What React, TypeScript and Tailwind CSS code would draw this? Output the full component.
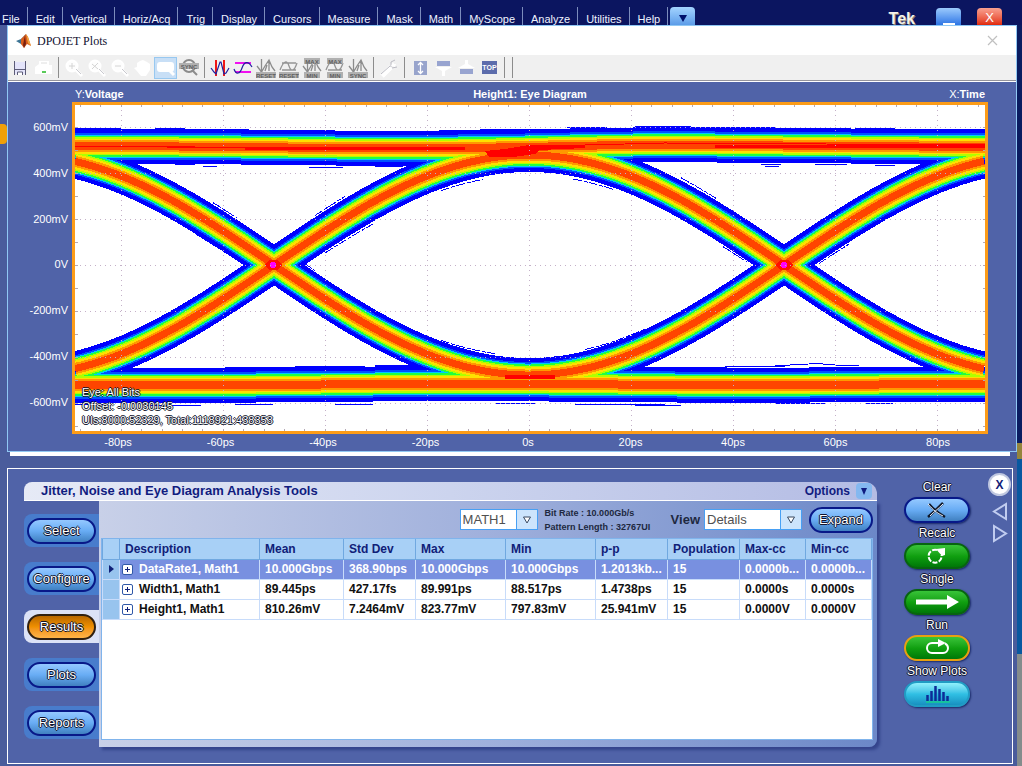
import { ReactNode } from "react";

const MENUS = [
  "File",
  "Edit",
  "Vertical",
  "Horiz/Acq",
  "Trig",
  "Display",
  "Cursors",
  "Measure",
  "Mask",
  "Math",
  "MyScope",
  "Analyze",
  "Utilities",
  "Help",
];

const OUTLINE =
  "[text-shadow:1px_0_#10142c,-1px_0_#10142c,0_1px_#10142c,0_-1px_#10142c]";

function MenuBar() {
  return (
    <header className="flex h-[25px] items-end bg-[#0b1560]">
      <nav className="flex h-[18px] text-[11px] leading-6 text-[#eef2ff]">
        {MENUS.map((menu, i) => (
          <a
            key={menu}
            href="#"
            className={`border-r border-[#7c8cbc] pr-[7px] ${i === 0 ? "pl-[2px]" : "pl-2"}`}
          >
            {menu}
          </a>
        ))}
        <button
          aria-label="More menus"
          className="ml-[2px] flex w-[25px] items-center justify-center rounded-t bg-gradient-to-b from-[#a4d4ff] to-[#5c9ce8]"
        >
          <svg width="8" height="8" viewBox="0 0 8 8" className="mt-1">
            <path d="M0 1h8L4 8z" fill="#00106c" />
          </svg>
        </button>
      </nav>
      <span className="ml-auto text-[16px] leading-3 font-bold text-[#f4f2ea] [text-shadow:1px_1px_#8c8474]">
        Tek
      </span>
      <button
        aria-label="Minimize"
        className="ml-[21px] flex h-[17px] w-[25px] items-end justify-center rounded-t bg-gradient-to-b from-[#9ccafc] to-[#2c74e4]"
      >
        <span className="h-[2px] w-3 bg-white" />
      </button>
      <button
        aria-label="Close"
        className="mr-5 ml-4 flex h-[17px] w-[25px] items-end justify-center rounded-t bg-gradient-to-b from-[#f8a090] to-[#e02400] text-[13px] leading-[14px] text-white"
      >
        X
      </button>
    </header>
  );
}

/* ---------- toolbar ---------- */

function Magnifier({ children }: { children?: ReactNode }) {
  return (
    <>
      <circle cx="8" cy="8" r="5.5" fill="#fdfdfd" stroke="#fff" strokeWidth="2" />
      <path d="M12 12l6 6" stroke="#fff" strokeWidth="3" />
      <path d="M12 11l5 5" stroke="#c9c9cf" strokeWidth="1" />
      {children}
    </>
  );
}

function Tag({ y, children }: { y: number; children: string }) {
  return (
    <>
      <rect x={children.length > 3 ? 0 : 2} y={y} width={children.length > 3 ? 20 : 16} height="6" fill="#b0b0b0" />
      <text x="10" y={y + 5.5} textAnchor="middle" fontSize="6" fontWeight="bold" fill="#606060">
        {children}
      </text>
    </>
  );
}

function Cursors() {
  return (
    <path
      d="M5.500 1v13M1 8l4.500 6L9 8l4-6 3 7 3 4M13 2v11M9 13l2-6"
      fill="none"
      stroke="#8c8c8c"
      strokeWidth="1.300"
    />
  );
}

function Wave() {
  return (
    <path d="M3 5h14M3 12h14M1 12C5 2 8 2 10 8s5 6 8-3" fill="none" stroke="#949494" strokeWidth="1.300" />
  );
}

type Tool = { name: string; icon: ReactNode; on?: boolean } | "|";

const TOOLS: Tool[] = [
  {
    name: "Save",
    icon: (
      <>
        <path d="M4 4h12v12H4z" fill="#e4e4fa" />
        <path d="M4.500 3v14M15.500 3v14M4 11.500h12" stroke="#5c5c78" />
        <path d="M7.500 17v-3h5v3" fill="#fff" stroke="#5c5c78" />
      </>
    ),
  },
  {
    name: "Print",
    icon: (
      <>
        <path d="M6 3h10v4h3v9H2V9l4-3z" fill="#fff" />
        <path d="M8 5h6" stroke="#dedede" />
        <path d="M9 14h4" stroke="#22b822" strokeWidth="1.500" />
      </>
    ),
  },
  "|",
  { name: "Zoom in", icon: <Magnifier><path d="M5 8h6M8 5v6" stroke="#d4d4d4" /></Magnifier> },
  { name: "Zoom both", icon: <Magnifier><path d="M5 6l6 5M11 5l-6 6" stroke="#d4d4d4" /></Magnifier> },
  { name: "Zoom out", icon: <Magnifier><path d="M5 8h6" stroke="#d4d4d4" /></Magnifier> },
  {
    name: "Pan",
    icon: <path d="M4 9V5l3-2 3-1 4 2 3 2v6l-4 6H8l-5-6-2-2z" fill="#fff" />,
  },
  {
    name: "Zoom window",
    on: true,
    icon: (
      <>
        <rect x="1" y="4" width="17" height="10" rx="3" fill="#fff" />
        <path d="M13 12l5 5" stroke="#fff" strokeWidth="3" />
      </>
    ),
  },
  {
    name: "Sync zoom",
    icon: (
      <>
        <circle cx="10" cy="8" r="6" fill="none" stroke="#8c8c8c" strokeWidth="2" />
        <path d="M13 12l5 5" stroke="#8c8c8c" strokeWidth="2" />
        <Tag y={5}>SYNC</Tag>
      </>
    ),
  },
  "|",
  {
    name: "Vertical cursors",
    icon: (
      <>
        <path d="M6 2v16M14 2v16" stroke="#f01818" strokeWidth="2" />
        <path d="M1 10l3 4 2 2 4-12h1l3 12 2-1 3-5" fill="none" stroke="#2020a0" strokeWidth="1.200" />
      </>
    ),
  },
  {
    name: "Horizontal cursors",
    icon: (
      <>
        <path d="M2 5h16M2 14h16" stroke="#f010f0" strokeWidth="2" />
        <path d="M1 11C3 17 7 16 9 10s6-8 10-1" fill="none" stroke="#2020a0" strokeWidth="1.200" />
      </>
    ),
  },
  { name: "Reset vertical cursors", icon: <><Cursors /><Tag y={14}>RESET</Tag></> },
  { name: "Reset horizontal cursors", icon: <><Wave /><Tag y={14}>RESET</Tag></> },
  { name: "Vertical cursors to limits", icon: <><Cursors /><Tag y={0}>MAX</Tag><Tag y={14}>MIN</Tag></> },
  { name: "Horizontal cursors to limits", icon: <><Wave /><Tag y={0}>MAX</Tag><Tag y={14}>MIN</Tag></> },
  { name: "Sync cursors", icon: <><Cursors /><Tag y={14}>SYNC</Tag></> },
  "|",
  {
    name: "Settings",
    icon: (
      <>
        <path d="M3 18L12 9" stroke="#fff" strokeWidth="5" />
        <path d="M2 16L11 8M12 9V4l4-2M13 10l5-1" stroke="#bcbcc4" fill="none" />
        <path d="M12 8l2-4 1 2 2 0-1 3z" fill="#fff" />
      </>
    ),
  },
  "|",
  {
    name: "Stretch",
    icon: (
      <>
        <rect x="4" y="3" width="13" height="14" fill="#98a4cc" />
        <path d="M10.500 5v10M8 7l2.500-2.500L13 7M8 13l2.500 2.500L13 13" fill="none" stroke="#fff" strokeWidth="1.300" />
      </>
    ),
  },
  {
    name: "Dock top",
    icon: (
      <>
        <path d="M4 3h13v5H4z" fill="#98a4d0" />
        <path d="M2 9h17l-7 4v5H9v-5z" fill="#fff" />
      </>
    ),
  },
  {
    name: "Dock bottom",
    icon: (
      <>
        <path d="M2 10h17l-7-4V2H9v4z" fill="#fff" />
        <path d="M4 11h13v5H4z" fill="#98a4d0" />
      </>
    ),
  },
  {
    name: "Always on top",
    icon: (
      <>
        <rect x="3" y="3" width="15" height="13" fill="#5c6cac" />
        <text x="10.500" y="12" textAnchor="middle" fontSize="7" fontWeight="bold" fill="#fff">
          TOP
        </text>
      </>
    ),
  },
  "|",
  "|",
];

function Toolbar() {
  return (
    <div className="flex h-[26px] items-center border-b border-[#94949c] bg-[#f0f0f0]">
      {TOOLS.map((tool, i) =>
        tool === "|" ? (
          <div key={i} className="flex w-2 justify-center">
            <div className="h-[21px] w-px bg-[#8c8c8c]" />
          </div>
        ) : (
          <button
            key={i}
            aria-label={tool.name}
            className={`flex h-[22px] w-[23px] items-center justify-center ${
              tool.on ? "border border-[#98c8f0] bg-[#c8dff6]" : ""
            }`}
          >
            <svg width="20" height="20" viewBox="0 0 20 20" className="shrink-0">
              {tool.icon}
            </svg>
          </button>
        )
      )}
    </div>
  );
}

/* ---------- eye diagram ---------- */

const W = 910;
const H = 326;

// one bit edge seen as a sine that crosses zero at -50ps and +50ps
function edgePath(sign: number, grow = 0, from = 0, to = W) {
  let d = "";
  for (let x = from; x <= to; x += 3) {
    const c = Math.cos(((x - 454) / 255) * (Math.PI / 2));
    const y = 160 - sign * 110 * c + grow;
    d += `${d ? "L" : "M"}${x} ${y.toFixed(1)}`;
  }
  return d;
}

const TOP_RAIL = "M0 41C80 41 180 42 260 43S400 43 450 42S560 39 640 40S800 42 910 42";
const BOTTOM_RAIL = "M0 280C120 281 200 280 300 279S480 279 600 280S800 279 910 279";

const LAYERS = [
  { color: "#0000ff", edge: 34, rail: 35 },
  { color: "#0050ff", edge: 26, rail: 27 },
  { color: "#00c8ff", edge: 23, rail: 23 },
  { color: "#20ff40", edge: 21, rail: 21 },
  { color: "#b0ff00", edge: 18, rail: 18 },
  { color: "#ffe000", edge: 15, rail: 15 },
  { color: "#ff9800", edge: 11, rail: 12 },
  { color: "#ff4400", edge: 7, rail: 8 },
];

// stray hits around the rails
const WISPS = [
  "M0 23h46M80 23h30M96 25h14M160 24h14M364 25h34M405 24h30M430 24h36M492 22h40M560 21h56M640 22h60M780 23h40",
  "M100 59h20M128 61h14M234 62h34M300 61h28M364 61h30M686 59h20M690 61h14M740 59h32M800 60h20",
  "M150 262h60M220 261h70M300 260h40M600 262h52M650 261h60M700 261c20-1 40-4 60-1h24",
  "M0 299h30M70 300h56M160 299h38M260 299h38M420 298h40M500 299h90M560 300h46M700 298h50M790 298h28",
];

const STRAYS: [number, number, number, number][] = [
  [1, 20, 366, 410],
  [1, -22, 240, 270],
  [-1, 20, 120, 150],
  [1, 22, 250, 300],
  [1, 20, 498, 540],
  [1, 22, 648, 672],
  [1, -22, 606, 644],
  [-1, -22, 138, 162],
  [-1, -22, 216, 240],
  [-1, -19, 366, 420],
  [-1, 22, 744, 774],
  [-1, -19, 510, 570],
];

function EyeDiagram() {
  const cols = Array.from({ length: 9 }, (_, i) => 46 + i * 102);
  const rows = Array.from({ length: 7 }, (_, i) => 22 + i * 46);
  return (
    <svg
      viewBox={`0 0 ${W} ${H}`}
      preserveAspectRatio="none"
      className="block h-[326px] w-full bg-white"
      role="img"
      aria-label="Eye diagram"
      fill="none"
      shapeRendering="crispEdges"
    >
      <g stroke="#0000ff">
        {WISPS.map((d) => (
          <path key={d} d={d} />
        ))}
        {STRAYS.map(([sign, grow, from, to], i) => (
          <path key={i} d={edgePath(sign, grow, from, to)} strokeDasharray="9 2 4 1" />
        ))}
      </g>
      {LAYERS.map((l) => (
        <g key={l.color} stroke={l.color}>
          <path d={edgePath(1)} strokeWidth={l.edge} />
          <path d={edgePath(-1)} strokeWidth={l.edge} />
          <path d={TOP_RAIL} strokeWidth={l.rail} />
          <path d={BOTTOM_RAIL} strokeWidth={l.rail} />
        </g>
      ))}
      {/* densest hits */}
      <path d="M0 41h120M90 42l140 1 140 1M470 41l120-3 320 2" stroke="#ff0000" />
      <path d="M170 43h220M640 41h270" stroke="#ff0000" strokeWidth="3" />
      <path d="M410 46l20-2 24-4h56v3l-46 2-4 4-22 3h-24z" fill="#ff0000" />
      <path d="M430 270h50v4h-50z" fill="#ff0000" />
      {[198, 709].map((x) => (
        <g key={x}>
          <path d={`M${x - 9} 160l5-5h8l5 5-5 5h-8z`} fill="#ff1000" />
          <circle cx={x} cy="160" r="3" fill="#ff00ff" />
        </g>
      ))}
      <g stroke="#c4b0c8" strokeDasharray="1 4">
        {cols.map((x) => (
          <path key={x} d={`M${x + 0.5} 0V${H}`} />
        ))}
        {rows.map((y) => (
          <path key={y} d={`M0 ${y + 0.5}H${W}`} />
        ))}
      </g>
      {/* ticks */}
      <path d={`M0 1H${W}M0 ${H - 1}H${W}`} stroke="#b4a8b4" strokeWidth="2" strokeDasharray="1 19.400" strokeDashoffset="-5" />
      <path d={`M1 22V${H}M${W - 1} 22V${H}`} stroke="#b4a8b4" strokeWidth="3" strokeDasharray="1 22" />
    </svg>
  );
}

function PlotWindow() {
  return (
    <section className="border border-[#90c8f4] bg-[#5063a8]">
      <div className="flex h-[29px] items-center bg-white pr-[18px] pl-[7px]">
        <svg width="18" height="16" viewBox="0 0 18 16">
          <path d="M1 8l5-2 5-5-3 11-2-1z" fill="#3c7494" />
          <path d="M6 6l5-5 2 3 3 9-4-2-3 4-3-4z" fill="#d85c1c" />
          <path d="M10 2l1 9-2 4-1-3z" fill="#782010" />
          <path d="M11 1l2 3 3 9-3-3z" fill="#f0a840" />
        </svg>
        <h1 className="ml-1 font-['Liberation_Serif',serif] text-[12px] text-[#101030]">DPOJET Plots</h1>
        <button aria-label="Close plots" className="ml-auto">
          <svg width="11" height="11" viewBox="0 0 11 11">
            <path d="M1 1l9 9M10 1l-9 9" stroke="#c0c0c0" strokeWidth="1.200" />
          </svg>
        </button>
      </div>
      <Toolbar />
      <div className="border-t border-white pr-7 pl-16 text-[11px] text-white">
        <div className="flex h-5 items-end justify-between px-[3px] leading-4">
          <span className="flex-1">
            Y:<b>Voltage</b>
          </span>
          <b>Height1: Eye Diagram</b>
          <span className="flex-1 text-right">
            X:<b>Time</b>
          </span>
        </div>
      </div>
      <div className="flex pr-7 text-[11px] leading-4 text-white">
        <div className="flex w-16 flex-col justify-between pt-[17px] pr-1 pb-6 text-right">
          {["600mV", "400mV", "200mV", "0V", "-200mV", "-400mV", "-600mV"].map((v) => (
            <span key={v}>{v}</span>
          ))}
        </div>
        <div className="relative flex-1 border-[3px] border-[#fc9c18]">
          <EyeDiagram />
          <div className={`absolute bottom-1 left-[7px] leading-[14px] ${OUTLINE}`}>
            <p>Eye: All Bits</p>
            <p>Offset: -0.0030145</p>
            <p>UIs:8000:52329, Total:1118921:438353</p>
          </div>
        </div>
      </div>
      <div className="flex h-[17px] justify-between pr-[58px] pl-[90px] text-[11px] leading-4 text-white">
        {["-80ps", "-60ps", "-40ps", "-20ps", "0s", "20ps", "40ps", "60ps", "80ps"].map((v) => (
          <span key={v} className="w-10 text-center">
            {v}
          </span>
        ))}
      </div>
    </section>
  );
}

/* ---------- results panel ---------- */

const COLUMNS = [
  ["Description", "w-[140px]"],
  ["Mean", "w-[84px]"],
  ["Std Dev", "w-[72px]"],
  ["Max", "w-[90px]"],
  ["Min", "w-[90px]"],
  ["p-p", "w-[72px]"],
  ["Population", "w-[72px]"],
  ["Max-cc", "w-[66px]"],
  ["Min-cc", "w-[66px]"],
];

const ROWS = [
  ["DataRate1, Math1", "10.000Gbps", "368.90bps", "10.000Gbps", "10.000Gbps", "1.2013kb...", "15", "0.0000b...", "0.0000b..."],
  ["Width1, Math1", "89.445ps", "427.17fs", "89.991ps", "88.517ps", "1.4738ps", "15", "0.0000s", "0.0000s"],
  ["Height1, Math1", "810.26mV", "7.2464mV", "823.77mV", "797.83mV", "25.941mV", "15", "0.0000V", "0.0000V"],
];

function ResultsTable() {
  return (
    <table className="w-full table-fixed border-collapse text-left text-[12px] leading-4 font-bold whitespace-nowrap">
      <thead>
        <tr className="h-5 bg-[#a8d0f6] text-[#102078]">
          <th className="w-[17px] border border-t-0 border-[#70a8e0] p-0" aria-label="Selected" />
          {COLUMNS.map(([label, width]) => (
            <th key={label} className={`${width} border border-t-0 border-[#70a8e0] p-0 pl-[5px]`}>
              {label}
            </th>
          ))}
        </tr>
      </thead>
      <tbody>
        {ROWS.map((row, r) => (
          <tr key={row[0]} className={`h-5 ${r === 0 ? "bg-[#7890e0] text-white" : "bg-white text-[#101010]"}`}>
            <td className="border border-[#c8dcfa] bg-[#98c4ee] p-0">
              {r === 0 && (
                <svg width="5" height="8" viewBox="0 0 5 8" className="mx-auto">
                  <path d="M0 0l5 4-5 4z" fill="#102078" />
                </svg>
              )}
            </td>
            {row.map((cell, c) => (
              <td key={c} className="border border-[#c8dcfa] p-0 pl-[5px]">
                {c === 0 ? (
                  <span className="-ml-[3px] flex items-center gap-[6px]">
                    <button
                      aria-label={`Expand ${cell}`}
                      className="flex h-[11px] w-[11px] items-center justify-center rounded-[2px] border border-[#3058a8] bg-white"
                    >
                      <svg width="5" height="5" viewBox="0 0 5 5">
                        <path d="M0 2.500h5M2.500 0v5" stroke="#102078" />
                      </svg>
                    </button>
                    {cell}
                  </span>
                ) : (
                  cell
                )}
              </td>
            ))}
          </tr>
        ))}
      </tbody>
    </table>
  );
}

function DropDown({ id, value, width }: { id: string; value: string; width: string }) {
  return (
    <div className={`relative h-[21px] border border-[#48a0f4] bg-white ${width}`}>
      <select
        id={id}
        aria-label={value}
        className="block h-full w-full appearance-none bg-transparent pl-[2px] text-[13px] leading-4 text-[#505050]"
      >
        <option>{value}</option>
      </select>
      <div className="pointer-events-none absolute inset-y-0 right-0 flex w-[21px] items-center justify-center border-l border-[#48a0f4] bg-[#cce4fc]">
        <svg width="8" height="8" viewBox="0 0 8 8">
          <path d="M.5 1h7L4 7z" fill="#fff" stroke="#384860" />
        </svg>
      </div>
    </div>
  );
}

const BLUE_PILL = "border-2 border-[#081888] bg-gradient-to-b from-[#94c8ff] via-[#68acf4] to-[#4080c0]";

function SideTabs() {
  return (
    <div className="flex w-[75px] flex-col gap-[15px] pt-[13px]">
      {["Select", "Configure", "Results", "Plots", "Reports"].map((tab) => {
        const active = tab === "Results";
        return (
          <div
            key={tab}
            className={`flex h-[33px] items-center rounded-l-lg pl-[3px] ${active ? "bg-[#dce2f6]" : "bg-[#487ccc]"}`}
          >
            <button
              className={`h-[26px] w-[69px] rounded-full text-[13px] leading-5 text-white ${OUTLINE} ${
                active
                  ? "border-2 border-[#302010] bg-gradient-to-b from-[#b86800] via-[#f09000] to-[#ffb448]"
                  : BLUE_PILL
              }`}
            >
              {tab}
            </button>
          </div>
        );
      })}
    </div>
  );
}

const GREEN = "border-2 border-[#086410] bg-gradient-to-b from-[#38c438] via-[#10a010] to-[#007808]";

const ACTIONS = [
  {
    label: "Clear",
    pill: BLUE_PILL,
    icon: (
      <>
        <path d="M10 4c5 6 9 9 16 13M24 3c-5 5-9 9-15 14" stroke="#101828" strokeWidth="2.500" />
        <path d="M9 4c5 6 9 9 15 12M24 4c-5 5-9 8-13 12" stroke="#e8f0ff" />
      </>
    ),
  },
  {
    label: "Recalc",
    pill: GREEN,
    icon: (
      <>
        <path d="M18 4a6.500 6.500 0 1 0 4.500 5" stroke="#fff" strokeWidth="2" strokeDasharray="5 1.500" />
        <path d="M17 3l9-1v7l-3 1z" fill="#fff" />
      </>
    ),
  },
  {
    label: "Single",
    pill: GREEN,
    icon: <path d="M-3 7.500h31V3l12 7-12 7v-4.500H-3z" fill="#fff" />,
  },
  {
    label: "Run",
    pill: "border-2 border-[#e8a010] bg-gradient-to-b from-[#38c438] via-[#10a010] to-[#007808]",
    icon: (
      <>
        <path d="M20 5h-7a5 5 0 0 0-5 5 5 5 0 0 0 5 5h11a5 5 0 0 0 5-5 5 5 0 0 0-3-4.500" stroke="#fff" strokeWidth="2" />
        <path d="M19 1l8 4-8 4z" fill="#fff" />
      </>
    ),
  },
  {
    label: "Show Plots",
    pill: "border-2 border-[#209cc4] bg-gradient-to-b from-[#90f0fc] via-[#30c0e4] to-[#1890c0]",
    icon: (
      <>
        <path d="M8.500 17v-6M12.500 17V7M16.500 17V2M20.500 17V5M24.500 17V8M28.500 17v-5" stroke="#0c2c98" strokeWidth="2.500" />
        <path d="M7 18h24" stroke="#10e870" />
      </>
    ),
  },
];

function ActionColumn() {
  return (
    <div className="ml-[27px] flex w-[66px] flex-col">
      {ACTIONS.map((a) => (
        <div key={a.label} className="flex flex-col items-center">
          <span className={`h-5 text-[12px] leading-5 whitespace-nowrap text-white ${OUTLINE}`}>{a.label}</span>
          <button
            aria-label={a.label}
            className={`flex h-[26px] w-[66px] items-center justify-center rounded-full shadow-[1px_1px_2px_#182868] ${a.pill}`}
          >
            <svg width="36" height="20" viewBox="0 0 36 20" fill="none" overflow="visible">
              {a.icon}
            </svg>
          </button>
        </div>
      ))}
    </div>
  );
}

function JitterPanel() {
  return (
    <section className="mr-1 flex flex-1 border border-white bg-[#5063a8] pt-2 pb-4 pl-4">
      <div className="min-w-0 flex-1 pt-[5px]">
        <div className="flex h-[19px] items-center rounded-tl-lg rounded-tr-xl border-b border-white bg-gradient-to-r from-[#e6eaf6] via-[#ccd4ee] to-[#b4bce4] pr-[5px] pl-[17px] text-[#101c80]">
          <h2 className="text-[13px] leading-5 font-bold">Jitter, Noise and Eye Diagram Analysis Tools</h2>
          <button className="ml-auto flex items-center gap-[6px] text-[12px] leading-4 font-bold">
            Options
            <span className="flex h-4 w-4 items-center justify-center rounded bg-[#84b8f0]">
              <svg width="6" height="7" viewBox="0 0 6 7">
                <path d="M0 0h6L3 7z" fill="#101c80" />
              </svg>
            </span>
          </button>
        </div>
        <div className="flex">
          <SideTabs />
          <div className="flex h-[246px] min-w-0 flex-1 flex-col rounded-br-lg bg-gradient-to-r from-[#c8d0e8] via-[#a0b0dc] to-[#6c88c8] pr-1 pb-[7px] pl-[2px] shadow-[3px_3px_3px_#34448c]">
            <div className="flex h-[37px] items-center justify-end">
              <DropDown id="source" value="MATH1" width="w-[78px]" />
              <div className="ml-[7px] w-[110px] text-[9px] leading-[14px] font-bold whitespace-nowrap text-[#202840]">
                <p>Bit Rate : 10.000Gb/s</p>
                <p>Pattern Length : 32767UI</p>
              </div>
              <label htmlFor="view" className="mr-1 ml-4 text-[13px] font-bold text-[#202840]">
                View
              </label>
              <DropDown id="view" value="Details" width="w-[98px]" />
              <button className={`ml-[7px] h-[26px] w-[64px] rounded-full text-[13px] leading-5 text-white ${OUTLINE} ${BLUE_PILL}`}>
                Expand
              </button>
            </div>
            <div className="flex-1 border border-[#80b4ec] bg-white pr-[2px]">
              <ResultsTable />
            </div>
          </div>
        </div>
      </div>
      <ActionColumn />
      <div className="ml-[17px] flex w-[25px] flex-col items-center">
        <button
          aria-label="Close panel"
          className="-mt-1 h-[23px] w-[23px] rounded-full border-2 border-[#c0c8e0] bg-white text-[12px] leading-4 font-bold text-[#102078]"
        >
          X
        </button>
        <div className="mt-[6px] flex flex-col gap-[3px]">
          <button aria-label="Previous">
            <svg width="16" height="19" viewBox="0 0 16 19">
              <path d="M14 2v15L2 9.500z" fill="none" stroke="#c0ccf0" strokeWidth="2" />
            </svg>
          </button>
          <button aria-label="Next">
            <svg width="16" height="19" viewBox="0 0 16 19">
              <path d="M2 2v15l12-7.500z" fill="none" stroke="#c0ccf0" strokeWidth="2" />
            </svg>
          </button>
        </div>
      </div>
    </section>
  );
}

export default function App() {
  return (
    <div className="flex min-h-screen flex-col bg-[#4a5c9c] font-['Liberation_Sans',Arial,sans-serif]">
      <MenuBar />
      <div className="flex flex-1">
        <div className="w-[7px] shrink-0 pt-[99px]">
          <div className="h-5 rounded-r bg-[#f0a008]" />
        </div>
        <main className="flex min-w-0 flex-1 flex-col pb-[3px]">
          <PlotWindow />
          <div className="mr-[7px] mb-3 ml-[3px] h-1 bg-white" />
          <JitterPanel />
        </main>
        <div className="flex w-[5px] shrink-0 flex-col bg-[#0a1c60]">
          <div className="h-[418px]" />
          <div className="h-4 bg-[#94843c]" />
          <div className="h-[195px] bg-[#0858a0]" />
          <div className="flex-1 bg-[#848c8c]" />
        </div>
      </div>
    </div>
  );
}
